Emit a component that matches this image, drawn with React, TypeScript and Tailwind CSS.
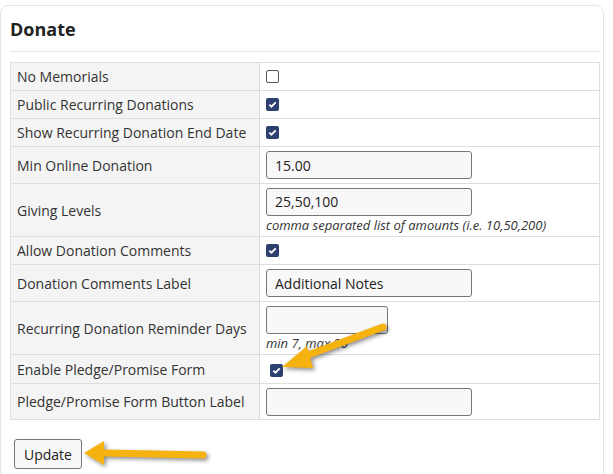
import React from "react";

const Check = ({ on }: { on?: boolean }) =>
  on ? (
    <span className="inline-flex w-[13px] h-[13px] rounded-[2px] bg-[#2d4170] items-center justify-center">
      <svg width="9" height="9" viewBox="0 0 10 10"><path d="M1.5 5.2l2.3 2.3L8.6 2.6" stroke="#fff" strokeWidth="2" fill="none" /></svg>
    </span>
  ) : (
    <span className="inline-block w-[13px] h-[13px] rounded-[2px] border border-[#555] bg-white" />
  );

const Input = ({ v, w = "w-[206px]" }: { v?: string; w?: string }) => (
  <div className={`${w} h-[28px] border border-[#767676] rounded-[3px] bg-[#f8f8f8] px-[8px] flex items-center text-[14px] text-[#222]`}>{v}</div>
);

const Row = ({ label, h, children }: { label: string; h: string; children: React.ReactNode }) => (
  <div className={`flex border-b border-[#dedede] ${h}`}>
    <div className="w-[249px] bg-[#f4f4f4] border-r border-[#dedede] px-[6px] flex items-center">{label}</div>
    <div className="flex-1 px-[6px] flex flex-col justify-center">{children}</div>
  </div>
);

export default function App() {
  return (
    <div className="w-[613px] h-[474px] bg-white relative overflow-hidden text-[#333] text-[14px]" style={{ fontFamily: "'Open Sans', 'Noto Sans', sans-serif" }}>
      <div className="absolute left-0 top-[5px] w-[604px] h-[480px] border border-[#e3e6ea] rounded-[8px]" />
      <div className="relative pt-[17px] pl-[10px] pr-[13px]">
        <h1 className="text-[18px] font-bold text-[#222] leading-[24px] pb-[10px] border-b border-[#e3e6ea]">Donate</h1>
        <div className="mt-[10px] border border-[#dedede] border-b-0">
          <Row label="No Memorials" h="h-[28px]"><Check /></Row>
          <Row label="Public Recurring Donations" h="h-[28px]"><Check on /></Row>
          <Row label="Show Recurring Donation End Date" h="h-[28px]"><Check on /></Row>
          <Row label="Min Online Donation" h="h-[37px]"><Input v="15.00" /></Row>
          <Row label="Giving Levels" h="h-[53px]">
            <Input v="25,50,100" />
            <div className="italic text-[13px] leading-[16px] mt-[1px]">comma separated list of amounts (i.e. 10,50,200)</div>
          </Row>
          <Row label="Allow Donation Comments" h="h-[28px]"><Check on /></Row>
          <Row label="Donation Comments Label" h="h-[37px]"><Input v="Additional Notes" /></Row>
          <Row label="Recurring Donation Reminder Days" h="h-[53px]">
            <Input w="w-[122px]" />
            <div className="italic text-[13px] leading-[16px] mt-[1px]">min 7, max 90</div>
          </Row>
          <Row label="Enable Pledge/Promise Form" h="h-[29px]"><span className="pl-[4px]"><Check on /></span></Row>
          <Row label="Pledge/Promise Form Button Label" h="h-[36px]"><Input /></Row>
        </div>
        <button className="mt-[19px] ml-[4px] h-[30px] px-[9px] border border-[#767676] rounded-[3px] bg-[#f8f8f8] text-[14px] text-[#222]">Update</button>
      </div>
      <svg className="absolute left-0 top-0" width="613" height="474" style={{ filter: "drop-shadow(2px 2px 2px rgba(0,0,0,0.45))" }}>
        <g stroke="#f6b20f" strokeWidth="7" strokeLinecap="round" fill="none">
          <path d="M383 327 L300 358" />
          <path d="M203 455 L105 453" />
        </g>
        <polygon points="282,367 307,346 313,368" fill="#f6b20f" />
        <polygon points="84,453 104,441 104,465" fill="#f6b20f" />
      </svg>
    </div>
  );
}
